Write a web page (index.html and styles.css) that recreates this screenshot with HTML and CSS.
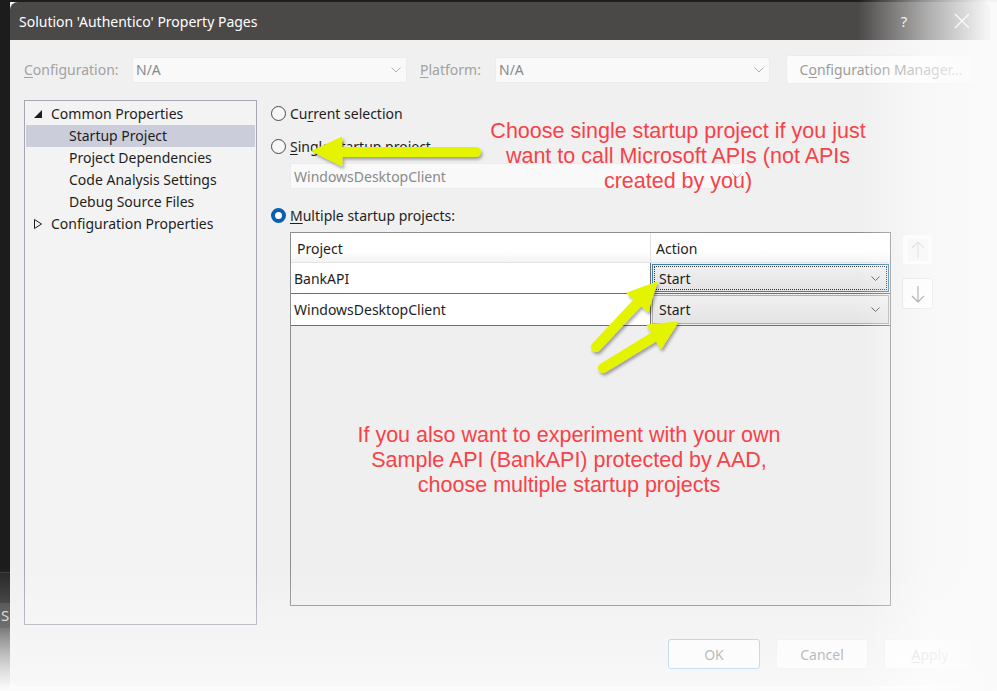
FILE: index.html
```html
<!DOCTYPE html>
<html>
<head>
<meta charset="utf-8">
<link rel="stylesheet" href="styles.css">
</head>
<body>
<div class="side">
  <div class="side-dark"></div>
  <div class="side-line"></div>
  <div class="side-mid"></div>
  <div class="side-band">S</div>
  <div class="side-fade"></div>
</div>
<div class="dialog">
  <div class="titlebar">
    <span class="title">Solution 'Authentico' Property Pages</span>
    <span class="tb-help">?</span>
    <span class="tb-close"><svg width="16" height="16" viewBox="0 0 16 16"><path d="M1 1L15 15M15 1L1 15" stroke="#fff" stroke-width="1.2" fill="none"/></svg></span>
  </div>
  <div class="body">
    <div class="config-row">
      <span class="lbl lbl-config"><u>C</u>onfiguration:</span>
      <div class="combo combo-dis"><span>N/A</span><svg class="chev" width="10" height="6" viewBox="0 0 10 6"><path d="M0.5 0.5L5 5L9.5 0.5" stroke="#b0b0b0" fill="none"/></svg></div>
      <span class="lbl lbl-plat"><u>P</u>latform:</span>
      <div class="combo combo-dis"><span>N/A</span><svg class="chev" width="10" height="6" viewBox="0 0 10 6"><path d="M0.5 0.5L5 5L9.5 0.5" stroke="#b0b0b0" fill="none"/></svg></div>
      <div class="btn btn-cm">C<u>o</u>nfiguration Manager...</div>
    </div>
    <div class="main">
      <div class="tree">
        <div class="tnode"><span class="tw"><svg width="8" height="8" viewBox="0 0 8 8"><path d="M8 0L8 8L0 8Z" fill="#1e1e1e"/></svg></span>Common Properties</div>
        <div class="tnode child sel">Startup Project</div>
        <div class="tnode child">Project Dependencies</div>
        <div class="tnode child">Code Analysis Settings</div>
        <div class="tnode child">Debug Source Files</div>
        <div class="tnode"><span class="tw"><svg width="8" height="10" viewBox="0 0 8 10"><path d="M0.5 0.5L7.5 5L0.5 9.5Z" fill="none" stroke="#1e1e1e"/></svg></span>Configuration Properties</div>
      </div>
      <div class="pane">
        <div class="radio r1"><span class="rc"></span>Cu<u>r</u>rent selection</div>
        <div class="radio r2"><span class="rc"></span><u>S</u>ingle startup project</div>
        <div class="combo combo-single"><span>WindowsDesktopClient</span><svg class="chev" width="10" height="6" viewBox="0 0 10 6"><path d="M0.5 0.5L5 5L9.5 0.5" stroke="#b0b0b0" fill="none"/></svg></div>
        <div class="radio r3"><span class="rc on"></span><u>M</u>ultiple startup projects:</div>
        <div class="table-area">
          <div class="grid">
            <div class="ghead">
              <div class="hcell hproj">Project</div>
              <div class="hcell hact">Action</div>
            </div>
            <div class="grow">
              <div class="pcell">BankAPI</div>
              <div class="acell focus"><span>Start</span><svg class="chev" width="9" height="5" viewBox="0 0 9 5"><path d="M0.5 0.5L4.5 4.5L8.5 0.5" stroke="#555" fill="none"/></svg></div>
            </div>
            <div class="grow grow2">
              <div class="pcell">WindowsDesktopClient</div>
              <div class="acell"><span>Start</span><svg class="chev" width="9" height="5" viewBox="0 0 9 5"><path d="M0.5 0.5L4.5 4.5L8.5 0.5" stroke="#555" fill="none"/></svg></div>
            </div>
          </div>
          <div class="movers">
            <div class="mv mv-dis"><span class="mv-in"><svg width="14" height="18" viewBox="0 0 14 18"><path d="M7 1V17M1 7L7 1L13 7" stroke="#c9c9c9" stroke-width="1.1" fill="none"/></svg></span></div>
            <div class="mv"><svg width="14" height="18" viewBox="0 0 14 18"><path d="M7 1V17M1 11L7 17L13 11" stroke="#6a6a6a" stroke-width="1.1" fill="none"/></svg></div>
          </div>
        </div>
      </div>
    </div>
    <div class="footer">
      <div class="btn fbtn ok">OK</div>
      <div class="btn fbtn">Cancel</div>
      <div class="btn fbtn dis"><u>A</u>pply</div>
    </div>
  </div>
</div>
<div class="rside"></div>
<div class="note note1">Choose single startup project if you just<br>want to call Microsoft APIs (not APIs<br>created by you)</div>
<div class="note note2">If you also want to experiment with your own<br>Sample API (BankAPI) protected by AAD,<br>choose multiple startup projects</div>
<svg class="arrows" width="997" height="691" viewBox="0 0 997 691">
  <defs>
    <filter id="sh" x="-20%" y="-20%" width="140%" height="140%">
      <feDropShadow dx="1.5" dy="2.5" stdDeviation="1.5" flood-color="#000" flood-opacity="0.35"/>
    </filter>
  </defs>
  <g fill="#e4f400" stroke="#e4f400" filter="url(#sh)">
    <line x1="476" y1="152" x2="336" y2="152" stroke-width="10" stroke-linecap="round"/>
    <polygon points="312,151 342,137 342,166" stroke-width="1" stroke-linejoin="round"/>
    <line x1="596" y1="347" x2="640" y2="300" stroke-width="10" stroke-linecap="round"/>
    <polygon points="657,282 648,312 627,293" stroke-width="1" stroke-linejoin="round"/>
    <line x1="603" y1="368" x2="657" y2="335" stroke-width="10" stroke-linecap="round"/>
    <polygon points="678,322 661,349 647,325" stroke-width="1" stroke-linejoin="round"/>
  </g>
</svg>
<div class="fade"></div>
</body>
</html>
```
FILE: styles.css
```css
* { box-sizing: border-box; }
body {
  margin: 0;
  width: 997px;
  height: 691px;
  overflow: hidden;
  position: relative;
  display: flex;
  background: linear-gradient(#1d1d1d 0, #1d1d1d 2px, #f8f8f8 2px);
  font-family: "Noto Sans", "Open Sans", sans-serif;
  font-size: 14px;
  color: #1e1e1e;
}
u { text-decoration: underline; text-underline-offset: 2px; }

.side { width: 10px; display: flex; flex-direction: column; }
.side-dark { height: 572px; background: #1c1c1c; }
.side-line { height: 1px; background: #3a3a3a; }
.side-mid { height: 30px; background: #242424; }
.side-band { height: 25px; background: #3b3b3b; color: #d0d0d0; font-size: 15px; line-height: 25px; padding-left: 1px; overflow: hidden; }
.side-fade { flex: 1; background: linear-gradient(#4a4a4a, #fafafa); }
.rside { flex: 1; background: linear-gradient(#1d1d1d 0, #1d1d1d 2px, #fafafa 2px); }

.dialog {
  width: 980px;
  height: 684px;
  margin-top: 2px;
  border-radius: 8px;
  background: #f0f0f0;
  overflow: hidden;
  display: flex;
  flex-direction: column;
}
.titlebar {
  height: 38px;
  background: #4b4948;
  color: #fff;
  display: flex;
  align-items: center;
  padding-left: 9px;
  font-size: 14px;
}
.title { flex: 1; }
.tb-help { width: 20px; text-align: center; font-size: 15px; color: #e8e8e8; margin-right: 3px; }
.tb-close { width: 16px; height: 16px; margin-left: 37px; margin-right: 20px; display: flex; }

.body { flex: 1; display: flex; flex-direction: column; padding: 15px 14px 0 14px; }

.config-row { height: 29px; display: flex; align-items: center; }
.lbl { color: #a2a2a2; }
.lbl-config { width: 108px; }
.lbl-plat { width: 75px; margin-left: 13px; }
.combo {
  height: 26px;
  background: #f9f9f9;
  border: 1px solid #ececec;
  border-radius: 2px;
  display: flex;
  align-items: center;
  padding: 0 5px 0 3px;
  color: #8a8a8a;
}
.combo span { flex: 1; }
.combo-dis { width: 275px; }
.chev { flex: none; }
.btn {
  display: flex;
  align-items: center;
  justify-content: center;
  background: #fbfbfb;
  border: 1px solid #ececec;
  border-radius: 3px;
  color: #9b9b9b;
}
.btn-cm { width: 190px; height: 29px; margin-left: 16px; }

.main { display: flex; margin-top: 16px; height: 525px; }
.tree {
  width: 233px;
  border: 1px solid #a5a7b2;
  background: #f3f3f3;
  padding: 2px 1px 1px;
}
.tnode { height: 22px; line-height: 22px; display: flex; align-items: center; padding-left: 25px; white-space: nowrap; }
.tnode.child { padding-left: 43px; }
.tnode.sel { background: #cbcdda; }
.tw { width: 17px; margin-left: -17px; display: flex; align-items: center; }

.pane { margin-left: 13px; flex: 1; display: flex; flex-direction: column; }
.radio { height: 22px; display: flex; align-items: center; white-space: nowrap; }
.r1 { margin-top: 2px; }
.r2 { margin-top: 11px; }
.r3 { margin-top: 15px; }
.rc {
  width: 15px; height: 15px;
  border: 1px solid #4a4a4a;
  border-radius: 50%;
  background: #f7f7f7;
  margin-left: 1px;
  margin-right: 4px;
  flex: none;
}
.rc.on { border: 4px solid #0a5fb4; background: #fff; }
.combo-single { width: 458px; margin-left: 20px; margin-top: 6px; }

.table-area { display: flex; margin-top: 6px; margin-left: 20px; }
.grid {
  width: 601px;
  height: 374px;
  border: 1px solid #8f8f8f;
  background: #efefef;
  display: flex;
  flex-direction: column;
}
.ghead { height: 30px; display: flex; background: linear-gradient(#ffffff 60%, #f4f4f4); border-bottom: 1px solid #e2e2e2; }
.hcell { display: flex; align-items: center; padding-left: 6px; padding-top: 1px; }
.hproj { width: 360px; border-right: 1px solid #e0e0e0; }
.hact { flex: 1; padding-left: 5px; }
.grow { height: 31px; display: flex; border-bottom: 1px solid #6e6e6e; }
.grow2 { height: 32px; }
.pcell { width: 360px; background: #fff; display: flex; align-items: center; padding-left: 3px; border-right: 1px solid #6e6e6e; }
.acell {
  flex: 1;
  margin: 1px;
  background: linear-gradient(#f0f0f0, #e3e3e3);
  border: 1px solid #adadad;
  display: flex;
  align-items: center;
  padding: 0 8px 0 6px;
}
.acell span { flex: 1; }
.acell.focus { border: 1px solid #3c7fb1; outline: 1px dotted #333; outline-offset: -3px; }

.movers { margin-left: 11px; display: flex; flex-direction: column; }
.mv {
  width: 31px; height: 31px;
  border: 1px solid #dcdcdc;
  border-radius: 3px;
  background: #fbfbfb;
  display: flex; align-items: center; justify-content: center;
  margin-top: 13px;
}
.mv-dis { margin-top: 2px; border-color: #efefef; }
.mv-in { width: 20px; height: 22px; background: #f3f3f3; display: flex; align-items: center; justify-content: center; }

.footer { display: flex; justify-content: flex-end; gap: 16px; margin-top: 14px; }
.fbtn { width: 92px; height: 30px; font-size: 14px; color: #8e8e8e; }
.fbtn.ok { border-color: #99c6ec; }
.fbtn.dis { color: #c5c5c5; }

.note {
  position: absolute;
  font-family: "Liberation Sans", Arial, sans-serif;
  font-size: 21.5px;
  line-height: 25px;
  color: #f84148;
  text-align: center;
  white-space: nowrap;
}
.note1 { left: 478px; top: 119px; width: 400px; }
.note2 { left: 349px; top: 423px; width: 440px; }
.arrows { position: absolute; left: 0; top: 0; pointer-events: none; }
.fade {
  position: absolute; left: 0; top: 0; width: 997px; height: 691px;
  pointer-events: none;
  background:
    linear-gradient(to right, rgba(255,255,255,0) 86%, rgba(255,255,255,0.55) 93%, rgba(250,250,250,0.97) 99%),
    linear-gradient(to bottom, rgba(255,255,255,0) 82%, rgba(255,255,255,0.55) 100%);
}
```
